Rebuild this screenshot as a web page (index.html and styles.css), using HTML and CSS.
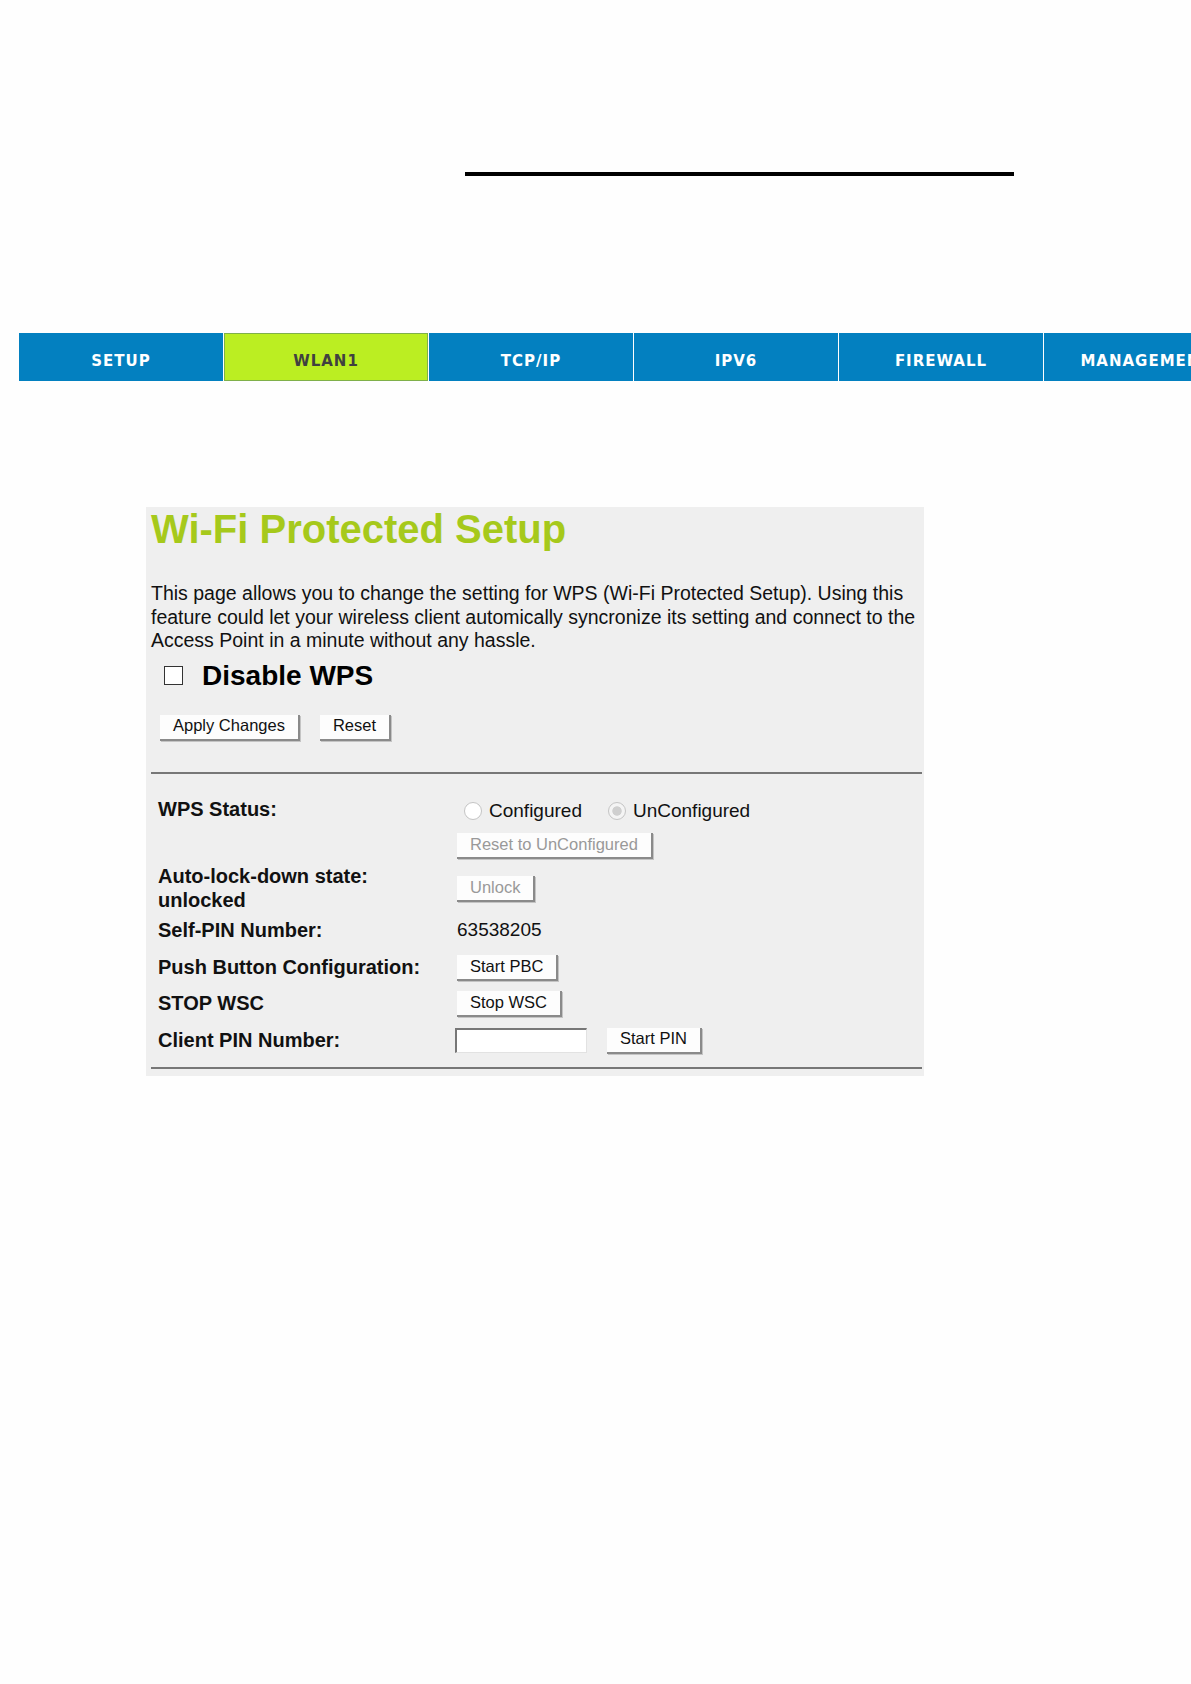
FILE: index.html
```html
<!DOCTYPE html>
<html lang="en">
<head>
  <meta charset="UTF-8">
  <title>Wi-Fi Protected Setup</title>
  <link rel="stylesheet" href="styles.css">
</head>
<body>

<div class="topline"></div>

<div class="nav">
  <a class="tab">SETUP</a>
  <a class="tab active">WLAN1</a>
  <a class="tab">TCP/IP</a>
  <a class="tab">IPV6</a>
  <a class="tab">FIREWALL</a>
  <a class="tab">MANAGEMENT</a>
</div>

<div class="panel">
  <h1>Wi-Fi Protected Setup</h1>

  <p class="intro">This page allows you to change the setting for WPS (Wi-Fi Protected Setup). Using this
  feature could let your wireless client automically syncronize its setting and connect to the
  Access Point in a minute without any hassle.</p>

  <label class="disable">
    <span class="box"></span>
    <span>Disable WPS</span>
  </label>

  <div class="actions">
    <button class="btn">Apply Changes</button>
    <button class="btn">Reset</button>
  </div>

  <hr class="rule">

  <table class="status">
    <tr class="row-wps">
      <td class="lbl">WPS Status:</td>
      <td>
        <div class="radios">
          <span class="radio"></span><span class="opt">Configured</span>
          <span class="radio checked"></span><span>UnConfigured</span>
        </div>
        <button class="btn off">Reset to UnConfigured</button>
      </td>
    </tr>
    <tr class="row-lock">
      <td class="lbl">Auto-lock-down state:<br>unlocked</td>
      <td><button class="btn off">Unlock</button></td>
    </tr>
    <tr class="row-pin">
      <td class="lbl">Self-PIN Number:</td>
      <td class="val">63538205</td>
    </tr>
    <tr class="row-pbc">
      <td class="lbl">Push Button Configuration:</td>
      <td><button class="btn">Start PBC</button></td>
    </tr>
    <tr class="row-stop">
      <td class="lbl">STOP WSC</td>
      <td><button class="btn">Stop WSC</button></td>
    </tr>
    <tr class="row-client">
      <td class="lbl">Client PIN Number:</td>
      <td><input type="text" class="pin"><button class="btn">Start PIN</button></td>
    </tr>
  </table>

  <hr class="rule last">
</div>

</body>
</html>
```

FILE: styles.css
```css
body {
  margin: 0;
  font-family: "DejaVu Sans", Verdana, sans-serif;
  background-color: #fefefe;
  overflow: hidden;
}

.topline {
  width: 549px;
  height: 4px;
  margin: 172px 0 0 465px;
  background-color: #000;
}

.nav {
  display: flex;
  margin: 157px 0 0 19px;
  height: 48px;
  overflow: hidden;
}

.tab {
  flex: 0 0 204px;
  display: flex;
  align-items: center;
  justify-content: center;
  padding-top: 7px;
  margin-right: 1px;
  background-color: #0380c0;
  color: #fff;
  font-weight: bold;
  font-size: 15px;
  letter-spacing: 1px;
}

.tab.active {
  background-color: #bbee22;
  color: #404040;
  box-shadow: inset 0 0 0 1px #7fb04a;
}

.panel {
  width: 771px;
  margin: 126px 0 0 146px;
  padding: 0 2px 7px 5px;
  background-color: #efefef;
  font-family: "Liberation Sans", Arial, sans-serif;
  color: #111;
}

h1 {
  margin: 0;
  font-size: 40px;
  font-weight: bold;
  color: #a6c91b;
  line-height: 44px;
}

.intro {
  margin: 31px 0 0;
  font-size: 19.5px;
  line-height: 23.6px;
}

.disable {
  display: flex;
  align-items: center;
  gap: 19px;
  height: 32px;
  margin: 7px 0 0 13px;
  font-size: 28px;
  font-weight: bold;
  color: #000;
}

.box {
  width: 17px;
  height: 17px;
  border: 1px solid #333;
  background-color: #fff;
}

.actions {
  display: flex;
  gap: 20px;
  margin: 23px 0 0 9px;
}

.btn {
  font-family: "Liberation Sans", Arial, sans-serif;
  font-size: 16.5px;
  height: 26px;
  padding: 0 13px 2px;
  background-color: #fdfdfd;
  color: #111;
  border: none;
  border-right: 2px solid #8a8a8a;
  border-bottom: 2px solid #8a8a8a;
  box-shadow: 1px 1px 0 #c4c4c4;
}

.btn.off {
  color: #999;
}

.rule {
  margin: 31px 0 0;
  border: none;
  border-top: 2px solid #777;
}

.rule.last {
  margin-top: 4px;
}

.status {
  border-collapse: collapse;
  margin: 23px 0 0 7px;
  font-size: 20px;
}

.status td {
  padding: 0;
  vertical-align: middle;
  line-height: 24px;
}

.lbl {
  width: 299px;
  font-weight: bold;
  color: #111;
}

.val {
  font-size: 19px;
}

.row-wps td {
  vertical-align: top;
  height: 64px;
}

.row-lock td { height: 54px; }
.row-pin td { height: 30px; }
.row-pbc td { height: 44px; }
.row-stop td { height: 26px; }
.row-client td { height: 46px; }

.radios {
  display: flex;
  align-items: center;
  height: 24px;
  margin: 2px 0 8px 7px;
  font-size: 19px;
}

.radio {
  width: 16px;
  height: 16px;
  border: 1px solid #c4c4c4;
  border-radius: 50%;
  background-color: #fff;
  margin-right: 7px;
}

.radio.checked {
  background: radial-gradient(circle, #cfcfcf 38%, #f4f4f4 45%);
}

.opt {
  margin-right: 26px;
}

.pin {
  box-sizing: border-box;
  width: 132px;
  height: 25px;
  margin: 0 20px 0 -2px;
  vertical-align: middle;
  border: 1px solid #e2e2e2;
  border-top: 2px solid #777;
  border-left: 2px solid #777;
  background-color: #fff;
}

.row-client .btn {
  vertical-align: middle;
}
```
